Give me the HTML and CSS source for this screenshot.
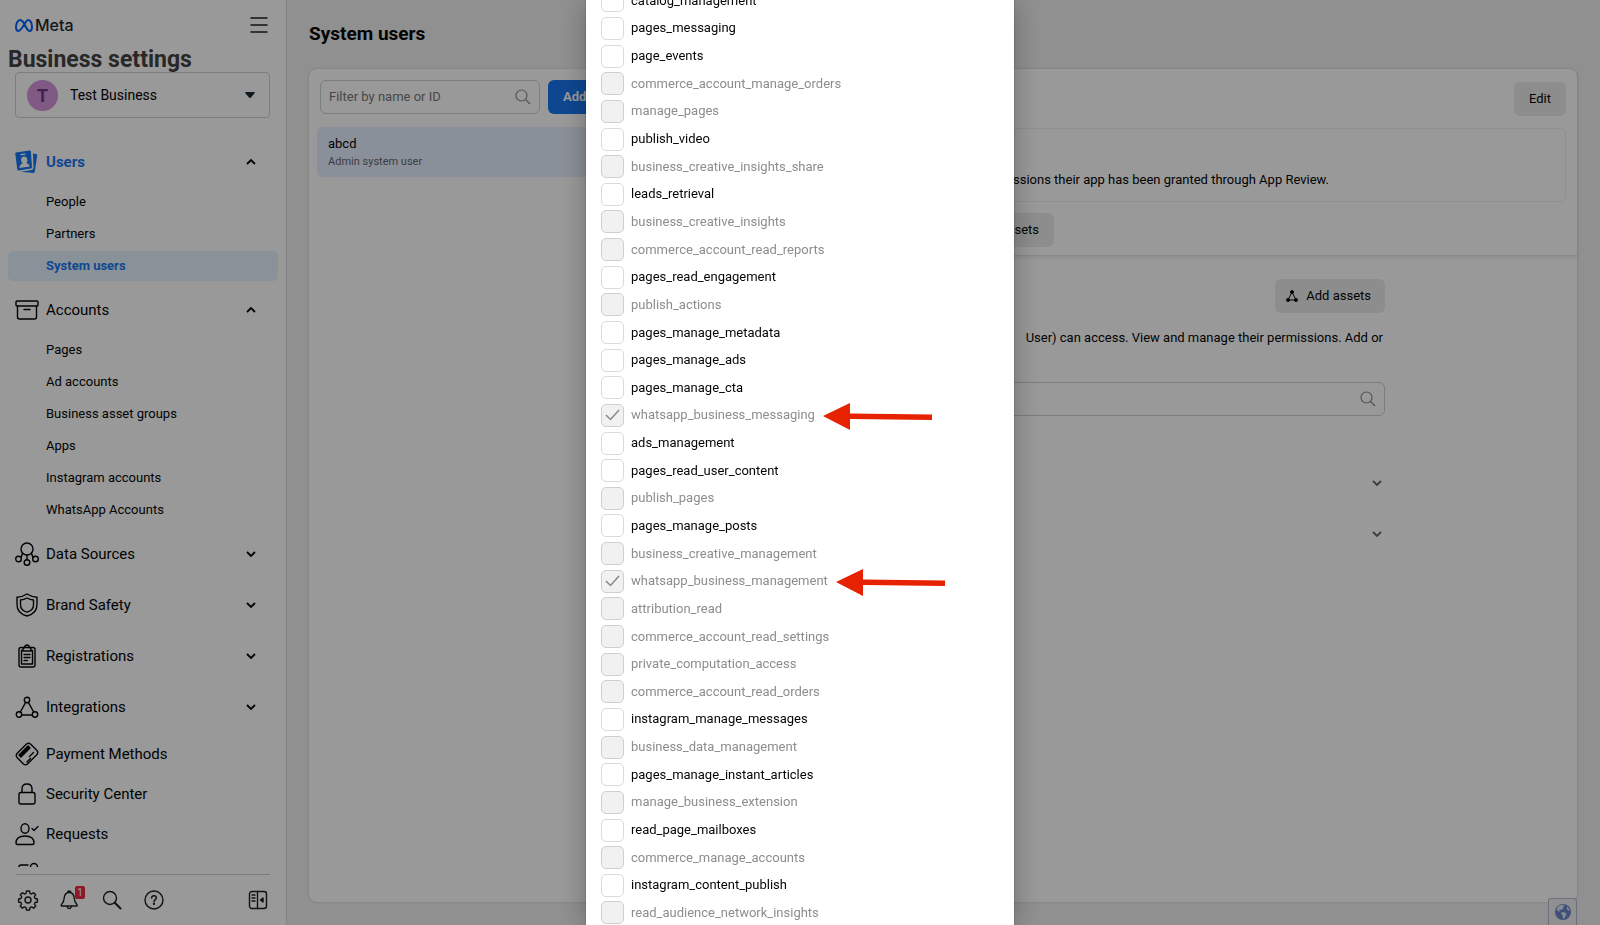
FILE: index.html
```html
<!DOCTYPE html>
<html lang="en">
<head>
  <meta charset="UTF-8">
  <meta name="viewport" content="width=device-width, initial-scale=1.0">
  <title>Business settings</title>
  <link rel="stylesheet" href="styles.css">
</head>
<body>
  <div class="page">
    <aside class="sidebar">
      <div class="brand">
        <a class="logo" href="#">
          <svg width="18" height="13" viewBox="0 0 18 13" fill="none" stroke="#0866ff" stroke-width="2"><path d="M9 4.2C7.6 2 6.400 1 5 1 2.700 1 1 4.500 1 8.200 1 10.500 1.900 12 3.500 12 5.300 12 6.400 10.200 9 5.800 11 2.400 12 1 13.500 1 15.600 1 17 4.600 17 8.300 17 10.500 16.200 12 14.700 12 13 12 12 10.500 9 4.200"/></svg>
          <span>Meta</span>
        </a>
        <button class="icon-button" aria-label="Menu">
          <svg width="18" height="16" viewBox="0 0 18 16" stroke="currentColor" stroke-width="1.500" stroke-linecap="round"><path d="M1 1h16M1 8h16M1 15h16"/></svg>
        </button>
      </div>
      <h1>Business settings</h1>
      <button class="business-picker">
        <span class="avatar">T</span>
        <span class="business-name">Test Business</span>
        <svg width="10" height="6" viewBox="0 0 10 6" fill="#1c2b33"><path d="M1 0h8q1 0 .8 1L6 5.500q-1 .8-2 0L.2 1Q0 0 1 0z"/></svg>
      </button>

      <nav class="nav">
        <section>
          <button class="nav-head active">
            <svg width="24" height="24" viewBox="0 0 24 24" fill="currentColor"><path fill-rule="evenodd" d="M.8 2.600 14.500.5q1.300-.1 1.400 1l1.100 15.500q0 1.200-1 1.500L3.800 20.500q-1.300.1-1.500-1L.3 4q-.1-1.100.5-1.400zM5.500 4v1.300l5-.6V3.400zM9 6.500c-2 .1-3 1.600-2.900 3.500.1 1.500.7 2.500 1.500 3.200C5.600 14 4.600 15.500 4.500 18l10.200-1.500c-.4-2-1.500-3-3.300-3.600.8-.8 1.100-1.800 1-3C12.200 7.700 11 6.400 9 6.500z"/><path d="M18 3.500l3.200.6q1.200.3 1 1.500L19.700 22q-.3 1.200-1.500 1L6 21.800l10.500-1.900q2-.5 2-2.500z"/></svg>
            <span>Users</span>
            <svg class="chevron up" width="12" height="12" viewBox="0 0 12 12"><path d="M2 4l4 4 4-4"/></svg>
          </button>
          <ul>
            <li><a href="#">People</a></li>
            <li><a href="#">Partners</a></li>
            <li><a href="#" class="selected">System users</a></li>
          </ul>
        </section>
        <section>
          <button class="nav-head">
            <svg class="line" width="24" height="24" viewBox="0 0 24 24"><rect x="1" y="3" width="22" height="5" rx="1"/><path d="M2.500 8v11q0 2 2 2h15q2 0 2-2V8M9 11.500h6"/></svg>
            <span>Accounts</span>
            <svg class="chevron up" width="12" height="12" viewBox="0 0 12 12"><path d="M2 4l4 4 4-4"/></svg>
          </button>
          <ul>
            <li><a href="#">Pages</a></li>
            <li><a href="#">Ad accounts</a></li>
            <li><a href="#">Business asset groups</a></li>
            <li><a href="#">Apps</a></li>
            <li><a href="#">Instagram accounts</a></li>
            <li><a href="#">WhatsApp Accounts</a></li>
          </ul>
        </section>
        <section>
          <button class="nav-head">
            <svg class="line" width="24" height="24" viewBox="0 0 24 24"><circle cx="12" cy="7" r="6"/><circle cx="3.500" cy="17" r="2.800"/><circle cx="20.500" cy="17" r="2.800"/><circle cx="12" cy="20.500" r="2.800"/><path d="M12 13v4.700M7.500 11.200l-1 3q-.3 1-1 1M16.500 11.200l1 3q.3 1 1 1"/></svg>
            <span>Data Sources</span>
            <svg class="chevron" width="12" height="12" viewBox="0 0 12 12"><path d="M2 4l4 4 4-4"/></svg>
          </button>
        </section>
        <section>
          <button class="nav-head">
            <svg class="line" width="24" height="24" viewBox="0 0 24 24"><path d="M12 1q4.500 3 10 3.200v7.300C22 17.500 18 21.500 12 23 6 21.500 2 17.500 2 11.500V4.200Q7.500 4 12 1z"/><path d="M12 5q3 1.800 6.500 2v5c0 3.500-2.500 6-6.500 7.200C8 18 5.500 15.500 5.500 12V7Q9 6.800 12 5z"/></svg>
            <span>Brand Safety</span>
            <svg class="chevron" width="12" height="12" viewBox="0 0 12 12"><path d="M2 4l4 4 4-4"/></svg>
          </button>
        </section>
        <section>
          <button class="nav-head">
            <svg class="line" width="24" height="24" viewBox="0 0 24 24"><rect x="4" y="3.500" width="16" height="19.500" rx="2"/><path d="M8 6.500H6.500v13.500h11V6.500H16M8 7h8V5q0-1-1.500-1.500Q14 1 12 1T9.500 3.500Q8 4 8 5zM9 10.500h6M9 13.500h6M9 16.500h3.500"/></svg>
            <span>Registrations</span>
            <svg class="chevron" width="12" height="12" viewBox="0 0 12 12"><path d="M2 4l4 4 4-4"/></svg>
          </button>
        </section>
        <section>
          <button class="nav-head">
            <svg class="line" width="24" height="24" viewBox="0 0 24 24"><circle cx="12" cy="5" r="2.700"/><circle cx="4" cy="19.500" r="2.700"/><circle cx="20" cy="19.500" r="2.700"/><path d="M10.700 7.400 5.300 17M13.300 7.400 18.700 17M6.700 20h10.600"/></svg>
            <span>Integrations</span>
            <svg class="chevron" width="12" height="12" viewBox="0 0 12 12"><path d="M2 4l4 4 4-4"/></svg>
          </button>
        </section>
        <a class="nav-link" href="#">
          <svg class="line" width="24" height="24" viewBox="0 0 24 24"><path d="M2 11.500 11.500 2q2-1.500 4 0L22 8.500q1.500 2 0 4L12.500 22q-2 1.500-4 0L2 15.500q-1.500-2 0-4zM12 20l3.500-3.500M14.500 14.500l4-4"/><path d="M4.500 14.500 14.500 4.500" stroke-width="4" stroke-linecap="butt"/></svg>
          <span>Payment Methods</span>
        </a>
        <a class="nav-link" href="#">
          <svg class="line" width="24" height="24" viewBox="0 0 24 24"><rect x="4" y="10.500" width="16" height="11.500" rx="2"/><path d="M7 10.500V7q0-5 5-5t5 5v3.500"/></svg>
          <span>Security Center</span>
        </a>
        <a class="nav-link" href="#">
          <svg class="line" width="24" height="24" viewBox="0 0 24 24"><ellipse cx="10" cy="6.500" rx="4" ry="4.700"/><path d="M1 21c0-4.500 2.500-7 9-7s9 2.500 9 7q0 1.500-1.500 1.500h-15Q1 22.500 1 21zM17 6.500l2 2 4-4"/></svg>
          <span>Requests</span>
        </a>
        <a class="nav-link" href="#">
          <svg class="line" width="24" height="24" viewBox="0 0 24 24"><path d="M13 3H6Q4 3 4 5v14q0 2 2 2h12q2 0 2-2v-5"/><circle cx="19" cy="5" r="3.500"/></svg>
          <span>Notifications</span>
        </a>
      </nav>

      <div class="toolbar">
        <button class="icon-button" aria-label="Settings">
          <svg class="line" width="20" height="20" viewBox="0 0 20 20"><circle cx="10" cy="10" r="3"/><path d="M8.500 1h3l.5 2.300 1.700.7 2-1.300 2 2-1.300 2 .7 1.800 2.300.5v3l-2.300.5-.7 1.700 1.300 2-2 2-2-1.300-1.700.8-.5 2.300h-3L8 17.700l-1.700-.8-2 1.300-2-2 1.300-2-.7-1.700L.6 12V9l2.300-.5.7-1.800-1.300-2 2-2 2 1.300L8 3.300z"/></svg>
        </button>
        <button class="icon-button" aria-label="Notifications">
          <svg class="line" width="20" height="20" viewBox="0 0 20 20"><path d="M1.500 16q-.7-.5 0-1.500C3.500 12.500 4 11 4.200 8c.3-3.500 2-5.500 5-5.500s4.700 2 5 5.500c.2 3 .7 4.500 2.700 6.500q.7 1 0 1.500zM7 16q.3 2.500 2.200 2.500T11.500 16M7.500 2.300Q8 1 9.200 1T11 2.300"/></svg>
          <span class="badge">1</span>
        </button>
        <button class="icon-button" aria-label="Search">
          <svg class="line" width="20" height="20" viewBox="0 0 20 20"><circle cx="8" cy="8" r="6.500"/><path d="M12.800 12.800 18.500 18.500" stroke-width="2"/></svg>
        </button>
        <button class="icon-button" aria-label="Help">
          <svg class="line" width="20" height="20" viewBox="0 0 20 20"><circle cx="10" cy="10" r="9"/><path d="M7.700 8q0-2.200 2.300-2.200T12.300 8q0 1-1.300 1.800-1 .7-1 1.700" stroke-width="1.500"/><circle cx="10" cy="13.800" r=".5"/></svg>
        </button>
        <button class="icon-button collapse" aria-label="Collapse">
          <svg class="line" width="20" height="20" viewBox="0 0 20 20"><rect x="1.500" y="1.500" width="17" height="17" rx="2.500"/><path d="M9.500 1.500v17M4 5h3M4 8h3M4 11h3"/><path d="M15 8v4l-2.500-2z" fill="currentColor"/></svg>
        </button>
      </div>
    </aside>

    <main class="content">
      <h2>System users</h2>
      <div class="card">
        <div class="user-list">
          <div class="user-filter">
            <div class="search">
              <input type="text" placeholder="Filter by name or ID" aria-label="Filter by name or ID">
              <svg width="16" height="16" viewBox="0 0 16 16"><circle cx="6.500" cy="6.500" r="5.500"/><path d="M10.500 10.500 15 15"/></svg>
            </div>
            <button class="primary">Add</button>
          </div>
          <a class="user" href="#">
            <span class="user-name">abcd</span>
            <span class="user-role">Admin system user</span>
          </a>
        </div>

        <div class="detail">
          <div class="detail-head">
            <button class="secondary">Edit</button>
            <div class="notice">
              <p>permissions their app has been granted through App Review.</p>
            </div>
            <button class="secondary assign">Add assets</button>
          </div>
          <div class="assets">
            <button class="secondary">
              <svg width="12" height="12" viewBox="0 0 12 12" fill="currentColor" stroke="currentColor"><circle cx="6" cy="2" r="1.500"/><circle cx="2" cy="10" r="1.500"/><circle cx="10" cy="10" r="1.500"/><path d="M6 2 2 10h8z" fill="none"/></svg>
              Add assets
            </button>
            <p>User) can access. View and manage their permissions. Add or</p>
            <div class="search">
              <input type="text" aria-label="Search assets">
              <svg width="16" height="16" viewBox="0 0 16 16"><circle cx="6.500" cy="6.500" r="5.500"/><path d="M10.500 10.500 15 15"/></svg>
            </div>
            <button class="asset-row" aria-label="Expand">
              <svg class="chevron" width="12" height="12" viewBox="0 0 12 12"><path d="M2 4l4 4 4-4"/></svg>
            </button>
            <button class="asset-row" aria-label="Expand">
              <svg class="chevron" width="12" height="12" viewBox="0 0 12 12"><path d="M2 4l4 4 4-4"/></svg>
            </button>
          </div>
        </div>
      </div>
    </main>
    <button class="globe" aria-label="Language">
      <svg width="16" height="16" viewBox="0 0 16 16"><circle cx="8" cy="8" r="8" fill="#6c86cb"/><path d="M3 2.500Q5 .6 8 .7l2 1-2 1 .5 1.500L6 6 4 5.500 5 8 1.500 6Q1.700 4 3 2.500zM7 8l3 .5 1.500 2L9 14.500H8L7.500 11 6 9.500zM12 2.500l2.500 3-.5 1.500-2-1.500z" fill="#dfe6f5"/></svg>
    </button>
  </div>

  <div class="overlay">
    <div class="dialog" role="dialog" aria-label="Permissions">
      <div class="permissions">
        <label><input type="checkbox">catalog_management</label>
        <label><input type="checkbox">pages_messaging</label>
        <label><input type="checkbox">page_events</label>
        <label class="disabled"><input type="checkbox" disabled>commerce_account_manage_orders</label>
        <label class="disabled"><input type="checkbox" disabled>manage_pages</label>
        <label><input type="checkbox">publish_video</label>
        <label class="disabled"><input type="checkbox" disabled>business_creative_insights_share</label>
        <label><input type="checkbox">leads_retrieval</label>
        <label class="disabled"><input type="checkbox" disabled>business_creative_insights</label>
        <label class="disabled"><input type="checkbox" disabled>commerce_account_read_reports</label>
        <label><input type="checkbox">pages_read_engagement</label>
        <label class="disabled"><input type="checkbox" disabled>publish_actions</label>
        <label><input type="checkbox">pages_manage_metadata</label>
        <label><input type="checkbox">pages_manage_ads</label>
        <label><input type="checkbox">pages_manage_cta</label>
        <label class="disabled"><input type="checkbox" checked disabled>whatsapp_business_messaging
          <svg class="arrow" width="109" height="27" viewBox="0 0 109 27"><path d="M0 13 27 0v10.500l82 1v5.500l-82-1V27z"/></svg>
        </label>
        <label><input type="checkbox">ads_management</label>
        <label><input type="checkbox">pages_read_user_content</label>
        <label class="disabled"><input type="checkbox" disabled>publish_pages</label>
        <label><input type="checkbox">pages_manage_posts</label>
        <label class="disabled"><input type="checkbox" disabled>business_creative_management</label>
        <label class="disabled"><input type="checkbox" checked disabled>whatsapp_business_management
          <svg class="arrow" width="109" height="27" viewBox="0 0 109 27"><path d="M0 13 27 0v10.500l82 1v5.500l-82-1V27z"/></svg>
        </label>
        <label class="disabled"><input type="checkbox" disabled>attribution_read</label>
        <label class="disabled"><input type="checkbox" disabled>commerce_account_read_settings</label>
        <label class="disabled"><input type="checkbox" disabled>private_computation_access</label>
        <label class="disabled"><input type="checkbox" disabled>commerce_account_read_orders</label>
        <label><input type="checkbox">instagram_manage_messages</label>
        <label class="disabled"><input type="checkbox" disabled>business_data_management</label>
        <label><input type="checkbox">pages_manage_instant_articles</label>
        <label class="disabled"><input type="checkbox" disabled>manage_business_extension</label>
        <label><input type="checkbox">read_page_mailboxes</label>
        <label class="disabled"><input type="checkbox" disabled>commerce_manage_accounts</label>
        <label><input type="checkbox">instagram_content_publish</label>
        <label class="disabled"><input type="checkbox" disabled>read_audience_network_insights</label>
      </div>
    </div>
  </div>
</body>
</html>
```

FILE: styles.css
```css
:root {
  --blue: #1877f2;
  --text: #050505;
  --muted: #65676b;
  --border: #ccd0d5;
  --page: #f0f0f1;
  --button: #ececec;
}

* {
  box-sizing: border-box;
}

body {
  margin: 0;
  font-family: Roboto, "Liberation Sans", sans-serif;
  font-size: 13px;
  line-height: 20px;
  color: var(--text);
  background: var(--page);
  overflow: hidden;
}

button {
  font: inherit;
  color: inherit;
  background: none;
  border: none;
  padding: 0;
  cursor: pointer;
}

a {
  color: inherit;
  text-decoration: none;
}

p {
  margin: 0;
}

svg {
  flex-shrink: 0;
  overflow: visible;
}

.line {
  fill: none;
  stroke: currentColor;
  stroke-width: 1.4;
  stroke-linecap: round;
  stroke-linejoin: round;
}

.page {
  display: flex;
  height: 100vh;
}

/* Sidebar */
.sidebar {
  display: flex;
  flex-direction: column;
  width: 287px;
  flex-shrink: 0;
  background: #fff;
  border-right: 1px solid #dadde1;
}

.brand {
  display: flex;
  align-items: center;
  justify-content: space-between;
  height: 44px;
  padding: 6px 15px 0 15px;
}

.logo {
  display: flex;
  align-items: center;
  gap: 2px;
  font-family: Inter, Roboto, sans-serif;
  font-size: 16px;
  font-weight: 500;
  color: #1c2b33;
}

.icon-button {
  display: flex;
  align-items: center;
  justify-content: center;
  position: relative;
  width: 24px;
  height: 24px;
  color: #1c1e21;
}

h1 {
  margin: 4px 8px 0;
  font-size: 23px;
  line-height: 24px;
  color: #444;
}

.business-picker {
  display: flex;
  align-items: center;
  gap: 12px;
  height: 46px;
  margin: 0 16px 0 15px;
  padding: 0 14px 0 11px;
  border: 1px solid var(--border);
  border-radius: 4px;
  text-align: left;
}

.avatar {
  width: 31px;
  border-radius: 50%;
  background: #d694de;
  color: #6b3a86;
  font-size: 18px;
  font-weight: 700;
  line-height: 31px;
  text-align: center;
}

.business-name {
  flex: 1;
  font-size: 14px;
}

.nav {
  flex: 1;
  min-height: 0;
  padding-top: 22px;
  overflow: hidden;
}

.nav section {
  margin-bottom: 7px;
}

.nav-head,
.nav-link {
  display: flex;
  align-items: center;
  gap: 7px;
  width: 100%;
  padding: 0 29px 0 15px;
  font-size: 15px;
  text-align: left;
}

.nav-head {
  height: 44px;
}

.nav-head span {
  flex: 1;
}

.nav-head.active svg:first-child,
.nav-head.active span {
  color: var(--blue);
  font-weight: 700;
}

.nav-link {
  height: 36px;
  margin-bottom: 4px;
}

.chevron {
  fill: none;
  stroke: currentColor;
  stroke-width: 1.8;
}

.chevron.up {
  transform: rotate(180deg);
}

.nav ul {
  display: grid;
  gap: 2px;
  margin: 3px 8px 0;
  padding: 0;
  list-style: none;
}

.nav li a {
  display: block;
  padding: 0 38px;
  border-radius: 5px;
  line-height: 30px;
}

.nav .selected {
  background: #e7f3ff;
  color: var(--blue);
  font-weight: 700;
}

.toolbar {
  display: flex;
  align-items: center;
  gap: 18px;
  height: 51px;
  margin: 7px 16px 0;
  border-top: 1px solid var(--border);
}

.collapse {
  margin-left: auto;
}

.badge {
  position: absolute;
  top: -2px;
  right: -3px;
  width: 10px;
  border-radius: 2px;
  background: #f02849;
  color: #fff;
  font-size: 10px;
  line-height: 13px;
}

/* Main content */
.content {
  display: flex;
  flex: 1;
  flex-direction: column;
  min-width: 0;
  padding: 20px 23px 23px 22px;
}

h2 {
  margin: 0 0 21px;
  font-size: 19px;
  line-height: 28px;
}

.card {
  display: flex;
  flex: 1;
  border-radius: 8px;
  background: #fff;
  box-shadow: 0 0 3px rgba(0, 0, 0, 0.15);
}

.user-list {
  width: 380px;
  padding: 11px 8px;
}

.user-filter {
  display: flex;
  gap: 8px;
  margin-bottom: 13px;
  padding: 0 3px;
}

.search {
  display: flex;
  align-items: center;
  width: 220px;
  height: 34px;
  padding: 0 8px;
  border: 1px solid var(--border);
  border-radius: 6px;
}

.search input {
  flex: 1;
  min-width: 0;
  padding: 0;
  border: none;
  outline: none;
  background: none;
  font: inherit;
}

.search input::placeholder {
  color: #777;
}

.search svg {
  fill: none;
  stroke: #8a8d91;
  stroke-width: 1.2;
}

.primary {
  height: 34px;
  padding: 0 15px;
  border-radius: 6px;
  background: var(--blue);
  color: #fff;
  font-weight: 700;
}

.secondary {
  display: flex;
  align-items: center;
  gap: 8px;
  height: 34px;
  padding: 0 15px;
  border-radius: 6px;
  background: var(--button);
}

.assets .secondary {
  padding: 0 14px 0 11px;
}

.user {
  display: block;
  padding: 8px 11px 6px;
  border-radius: 6px;
  background: #e7f0ff;
}

.user-name,
.user-role {
  display: block;
  line-height: 18px;
}

.user-role {
  color: var(--muted);
  font-size: 11px;
}

.detail {
  display: flex;
  flex: 1;
  flex-direction: column;
}

.detail-head {
  display: flex;
  flex-direction: column;
  align-items: flex-end;
  padding: 13px 11px 8px;
  border-bottom: 1px solid #e2e2e2;
  box-shadow: 0 2px 4px rgba(0, 0, 0, 0.08);
}

.notice {
  align-self: stretch;
  margin: 12px 0 11px;
  padding: 41px 236px 11px 12px;
  border: 1px solid #eee;
  border-radius: 6px;
  text-align: right;
}

.assign {
  margin-right: 512px;
}

.assets {
  display: flex;
  flex-direction: column;
  align-items: flex-end;
  padding: 23px 192px 0 0;
}

.assets p {
  margin: 15px 2px 34px;
}

.assets .search {
  width: 500px;
  margin-bottom: 41px;
}

.asset-row {
  display: flex;
  align-items: center;
  justify-content: flex-end;
  width: 500px;
  height: 51px;
  padding-right: 2px;
  color: #606770;
}

.globe {
  position: fixed;
  right: 23px;
  bottom: 0;
  width: 29px;
  height: 27px;
  border: 1px solid #b4b9cf;
  border-bottom: none;
  border-radius: 3px 3px 0 0;
  background: var(--page);
}

.globe svg {
  display: block;
  margin: 0 auto;
}

/* Permission dialog */
.overlay {
  position: fixed;
  inset: 0;
  display: flex;
  justify-content: center;
  background: rgba(0, 0, 0, 0.4);
}

.dialog {
  display: flex;
  width: 428px;
  height: 100%;
  padding: 0 15px;
  background: #fff;
  box-shadow: 0 2px 26px rgba(0, 0, 0, 0.3), 0 0 0 1px rgba(0, 0, 0, 0.1);
}

.permissions {
  display: flex;
  flex: 1;
  flex-direction: column;
  margin: -13px 0 -2px;
}

.permissions label {
  display: flex;
  flex: 1;
  align-items: center;
  min-height: 0;
}

.permissions input {
  appearance: none;
  flex-shrink: 0;
  width: 23px;
  height: 23px;
  margin: 0 7px 0 0;
  border: 1px solid #dadada;
  border-radius: 5px;
  background: #fff center no-repeat;
}

.permissions input:disabled {
  border-color: #cfcfcf;
  background-color: #f1f1f1;
}

.permissions input:checked {
  background-image: url("data:image/svg+xml,%3Csvg xmlns='http://www.w3.org/2000/svg' width='15' height='12' fill='none' stroke='%23888' stroke-width='1.5'%3E%3Cpath d='M1 6l4.500 4.500L14 1'/%3E%3C/svg%3E");
}

.disabled {
  color: #8d8d8d;
}

.arrow {
  margin: 3px 0 0 8px;
  fill: #e62200;
}
```
